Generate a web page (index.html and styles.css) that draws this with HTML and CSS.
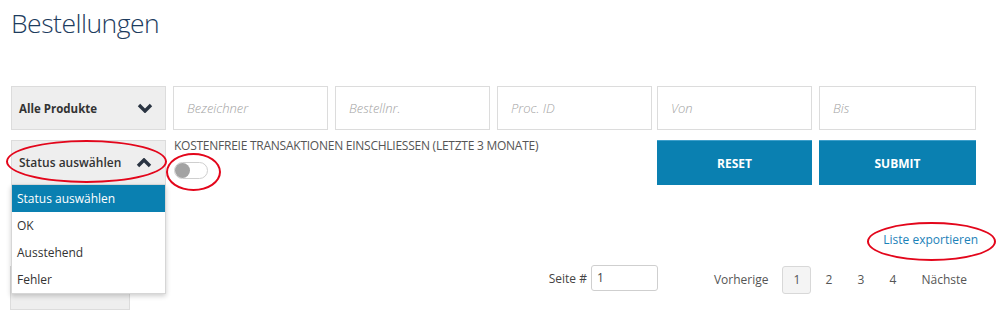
FILE: index.html
```html
<!DOCTYPE html>
<html lang="de">
<head>
    <meta charset="UTF-8">
    <meta name="viewport" content="width=device-width, initial-scale=1.0">
    <title>Bestellungen</title>
    <link rel="stylesheet" href="styles.css">
</head>
<body>
    <div class="page">
        <h1>Bestellungen</h1>

        <!-- Filterzeile -->
        <div class="filters">
            <div class="select">
                <span>Alle Produkte</span>
                <svg class="chevron" viewBox="0 0 16 10"><polyline points="2,2 8,8 14,2" /></svg>
            </div>
            <div class="field"><span class="placeholder">Bezeichner</span></div>
            <div class="field"><span class="placeholder">Bestellnr.</span></div>
            <div class="field"><span class="placeholder">Proc. ID</span></div>
            <div class="field col5"><span class="placeholder">Von</span></div>
            <div class="field col6"><span class="placeholder">Bis</span></div>
        </div>

        <div class="filters second">
            <div class="status">
                <div class="select open">
                    <span>Status auswählen</span>
                    <svg class="chevron" viewBox="0 0 16 10"><polyline points="2,8 8,2 14,8" /></svg>
                </div>
                <ul class="dropdown">
                    <li class="active">Status auswählen</li>
                    <li>OK</li>
                    <li>Ausstehend</li>
                    <li>Fehler</li>
                </ul>
            </div>
            <div class="free">
                <div class="free-label">Kostenfreie Transaktionen einschliessen (letzte 3 Monate)</div>
                <div class="toggle"><span class="knob"></span></div>
            </div>
            <button class="btn col5">Reset</button>
            <button class="btn col6">Submit</button>
        </div>

        <div class="export-row">
            <a href="#" class="export">Liste exportieren</a>
        </div>

        <div class="pagination-row">
            <div class="per-page"></div>
            <div class="goto">
                <span>Seite #</span>
                <div class="goto-input">1</div>
            </div>
            <div class="pager">
                <span class="pg text">Vorherige</span>
                <span class="pg num current">1</span>
                <span class="pg num">2</span>
                <span class="pg num">3</span>
                <span class="pg num">4</span>
                <span class="pg text">Nächste</span>
            </div>
        </div>

        <!-- rote Markierungen -->
        <span class="mark mark-status"></span>
        <span class="mark mark-toggle"></span>
        <span class="mark mark-export"></span>
    </div>
</body>
</html>
```

FILE: styles.css
```css
body {
    margin: 0;
    font-family: "Open Sans", "Liberation Sans", sans-serif;
    color: #444;
    background: #fff;
}
.page {
    position: relative;
    width: 1000px;
    height: 318px;
    padding: 0 24px 0 11px;
    box-sizing: border-box;
    overflow: hidden;
}
h1 {
    margin: 3px 0 0 0;
    font-size: 26.5px;
    font-weight: 300;
    letter-spacing: -0.5px;
    line-height: 40px;
    color: #1d3c5e;
}
.filters {
    display: grid;
    grid-template-columns: repeat(6, 155px);
    column-gap: 7px;
    margin-top: 43px;
}
.filters .col5 {
    margin: 0 2px 0 -2px;
}
.filters .col6 {
    margin-left: -2px;
}
.filters.second {
    margin-top: 10px;
    align-items: start;
}
.field,
.select {
    height: 44px;
    border: 1px solid #dcdcdc;
    box-sizing: border-box;
    display: flex;
    align-items: center;
    padding: 0 13px;
    background: #fff;
}
.placeholder {
    font-size: 13px;
    font-style: italic;
    font-weight: 300;
    color: #a3a3a3;
}
.select {
    background: #eee;
    padding: 0 12px 0 7px;
    justify-content: space-between;
    font-size: 11.5px;
    font-weight: 700;
    color: #333;
}
.select.open {
    height: 45px;
    font-weight: 600;
    font-size: 12px;
    padding-right: 13px;
}
.chevron {
    width: 16px;
    height: 10px;
    fill: none;
    stroke: #2a3442;
    stroke-width: 3.4;
}
.status {
    position: relative;
}
.dropdown {
    position: absolute;
    top: 45px;
    left: 0;
    right: 0;
    margin: 0;
    padding: 0;
    list-style: none;
    background: #fff;
    border: 1px solid #d6d6d6;
    border-top: none;
    box-shadow: 0 2px 5px rgba(0, 0, 0, 0.2);
    z-index: 2;
}
.dropdown li {
    height: 27px;
    line-height: 27px;
    padding-left: 5px;
    font-size: 12px;
    color: #333;
}
.dropdown li.active {
    background: #0a80b1;
    color: #fff;
}
.free {
    grid-column: span 3;
    padding-left: 1px;
}
.free-label {
    margin-top: -1px;
    font-size: 12px;
    letter-spacing: -0.25px;
    line-height: 14px;
    text-transform: uppercase;
    color: #555;
}
.toggle {
    margin-top: 9px;
    width: 34px;
    height: 17px;
    border: 1px solid #cfcfcf;
    border-radius: 10px;
    box-sizing: border-box;
    position: relative;
    background: #fff;
}
.knob {
    position: absolute;
    left: 0;
    top: 0;
    width: 15px;
    height: 15px;
    border-radius: 50%;
    background: #a3a3a3;
}
.btn {
    height: 45px;
    border: none;
    border-top: 1px solid #3d9fcb;
    background: #0a80b1;
    color: #fff;
    font-family: inherit;
    font-size: 12px;
    font-weight: 700;
    text-transform: uppercase;
    cursor: pointer;
}
.export-row {
    display: flex;
    justify-content: flex-end;
    margin-top: 46px;
    margin-right: -2px;
}
.export {
    font-size: 12px;
    line-height: 18px;
    color: #1b81b8;
    text-decoration: none;
}
.pagination-row {
    display: flex;
    align-items: flex-start;
    margin-top: 16px;
    margin-right: -2px;
}
.per-page {
    margin-left: -1px;
    margin-top: 1px;
    width: 120px;
    height: 44px;
    background: #eee;
    border: 1px solid #dcdcdc;
    box-sizing: border-box;
}
.goto {
    margin-left: auto;
    display: flex;
    align-items: center;
    gap: 4px;
    font-size: 12px;
    color: #444;
}
.goto-input {
    width: 67px;
    height: 26px;
    border: 1px solid #cfcfcf;
    border-radius: 3px;
    box-sizing: border-box;
    padding-left: 5px;
    line-height: 24px;
}
.pager {
    display: flex;
    gap: 3px;
    margin-left: 45px;
    margin-top: 1px;
    font-size: 12px;
    color: #555;
}
.pg {
    height: 28px;
    line-height: 28px;
    box-sizing: border-box;
    text-align: center;
}
.pg.text {
    padding: 0 11px;
}
.pg.num {
    width: 29px;
}
.pg.current {
    background: #f4f4f4;
    border: 1px solid #d8d8d8;
    border-radius: 3px;
    line-height: 26px;
}
.mark {
    position: absolute;
    border: 2px solid #e3061b;
    border-radius: 50%;
    box-sizing: border-box;
    z-index: 3;
}
.mark-status {
    left: 6px;
    top: 140px;
    width: 161px;
    height: 43px;
}
.mark-toggle {
    left: 166px;
    top: 153px;
    width: 55px;
    height: 38px;
}
.mark-export {
    left: 867px;
    top: 222px;
    width: 129px;
    height: 39px;
}
```
